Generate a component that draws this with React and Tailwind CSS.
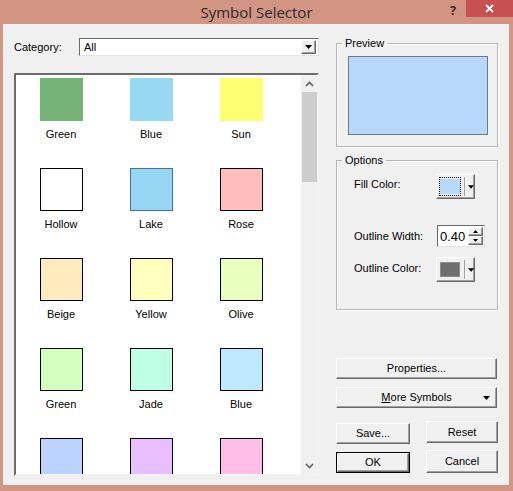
import React from "react";

const swatches = [
  { name: "Green", fill: "#75b376", border: "" },
  { name: "Blue", fill: "#98d8f0", border: "" },
  { name: "Sun", fill: "#ffff73", border: "" },
  { name: "Hollow", fill: "#ffffff", border: "border-black" },
  { name: "Lake", fill: "#97d6f2", border: "border-[#4a6e9c]" },
  { name: "Rose", fill: "#ffbebe", border: "border-black" },
  { name: "Beige", fill: "#ffebbe", border: "border-black" },
  { name: "Yellow", fill: "#ffffbe", border: "border-black" },
  { name: "Olive", fill: "#e9ffbe", border: "border-black" },
  { name: "Green", fill: "#d3ffbe", border: "border-black" },
  { name: "Jade", fill: "#beffe8", border: "border-black" },
  { name: "Blue", fill: "#bee8ff", border: "border-black" },
  // last row is scrolled out of view below the swatches
  { name: "", fill: "#bed2ff", border: "border-black" },
  { name: "", fill: "#e8beff", border: "border-black" },
  { name: "", fill: "#ffbee8", border: "border-black" },
];

const btn3d =
  "bg-[#f0f0f0] border border-t-white border-l-white border-r-[#696969] border-b-[#696969] shadow-[inset_-1px_-1px_0_#a0a0a0]";

function DownTri({ className = "" }) {
  return (
    <svg width="7" height="4" viewBox="0 0 7 4" className={className}>
      <path d="M0 0h7L3.5 4z" fill="#000" />
    </svg>
  );
}

function Chevron({ up }) {
  return (
    <svg width="9" height="6" viewBox="0 0 9 6">
      <path d={up ? "M1 5L4.5 1.5L8 5" : "M1 1L4.5 4.5L8 1"} stroke="#606060" strokeWidth="1.6" fill="none" />
    </svg>
  );
}

function ColorButton({ swatch, focus }) {
  return (
    <div className={`${btn3d} w-[39px] h-[25px] flex items-center pl-[2px]`}>
      <div className={`w-[24px] h-[19px] flex items-center justify-center ${focus ? "border border-dotted border-black" : ""}`}>
        <div className={`w-[20px] h-[15px] ${swatch}`} />
      </div>
      <div className="ml-[3px] w-[2px] h-[19px] border-l border-l-[#a0a0a0] border-r border-r-white" />
      <DownTri className="ml-[2px]" />
    </div>
  );
}

function Group({ label, className = "", children }) {
  return (
    <div className={`relative border border-[#b5b5b5] shadow-[inset_1px_1px_0_#fff,1px_1px_0_#fff] ${className}`}>
      <span className="absolute left-[5px] -top-[8px] px-[3px] bg-[#f0f0f0] leading-[14px]">{label}</span>
      {children}
    </div>
  );
}

export default function App() {
  return (
    <div
      className="w-[513px] h-[491px] bg-[#d29483] flex flex-col text-[11px] text-black"
      style={{ fontFamily: '"Liberation Sans", Arial, sans-serif' }}
    >
      <div className="relative h-[24px] flex items-center justify-center">
        <span className="text-[15px] text-[#2a2a2a] leading-none pt-[1px]" style={{ fontFamily: '"Open Sans", "Noto Sans", sans-serif' }}>
          Symbol Selector
        </span>
        <span className="absolute left-[450px] top-[1px] text-[13px] font-bold text-[#3a2a20]" style={{ fontFamily: '"Open Sans", sans-serif' }}>?</span>
        <div className="absolute right-0 top-0 w-[47px] h-[17px] bg-[#c75050] flex items-center justify-center">
          <svg width="9" height="9" viewBox="0 0 9 9">
            <path d="M1 1L8 8M8 1L1 8" stroke="#fff" strokeWidth="1.8" />
          </svg>
        </div>
      </div>

      <div className="ml-[3px] mr-[4px] mb-[6px] flex-1 bg-[#f0f0f0] flex pl-[11px] pt-[14px]">
        {/* left column */}
        <div className="w-[305px] flex flex-col">
          <div className="h-[18px] flex items-center">
            <span className="w-[65px]">Category:</span>
            <div className="w-[240px] h-[18px] bg-white border border-t-[#696969] border-l-[#696969] border-r-[#e3e3e3] border-b-[#e3e3e3] flex items-center justify-between pl-[4px] pr-[2px]">
              <span>All</span>
              <div className={`${btn3d} w-[15px] h-[14px] flex items-center justify-center`}>
                <DownTri />
              </div>
            </div>
          </div>

          <div className="mt-[17px] h-[403px] bg-white border-2 border-t-[#6d6d6d] border-l-[#6d6d6d] border-r-[#f2f2f2] border-b-[#f2f2f2] flex overflow-hidden">
            <div className="flex-1 overflow-hidden pt-[3px]">
              <div className="grid grid-cols-[90px_90px_90px] gap-y-[27px]">
                {swatches.map((s, i) => (
                  <div key={i} className="flex flex-col items-center h-[63px]">
                    <div className={`w-[43px] h-[43px] ${s.border ? "border " + s.border : ""}`} style={{ backgroundColor: s.fill }} />
                    {s.name && <span className="mt-[7px] leading-[13px]">{s.name}</span>}
                  </div>
                ))}
              </div>
            </div>
            <div className="w-[16px] bg-[#f0f0f0] flex flex-col items-center">
              <div className="h-[17px] flex items-center justify-center pt-[1px]">
                <Chevron up />
              </div>
              <div className="w-[15px] h-[90px] bg-[#cdcdcd]" />
              <div className="flex-1" />
              <div className="h-[17px] flex items-center justify-center">
                <Chevron />
              </div>
            </div>
          </div>
        </div>

        {/* right column */}
        <div className="ml-[17px] w-[162px] flex flex-col pt-[5px]">
          <Group label="Preview" className="h-[104px]">
            <div className="mt-[12px] ml-[11px] w-[140px] h-[79px] bg-[#b8d8fb] border border-[#6d7a88]" />
          </Group>

          <Group label="Options" className="mt-[13px] h-[150px] pl-[17px] pt-[13px]">
            <div className="flex items-start">
              <span className="w-[82px] pt-[2px]">Fill Color:</span>
              <ColorButton swatch="bg-[#b8d8fb]" focus />
            </div>
            <div className="flex items-center mt-[26px]">
              <span className="w-[83px]">Outline Width:</span>
              <div className="w-[48px] h-[22px] bg-white border border-t-[#696969] border-l-[#696969] border-r-[#e3e3e3] border-b-[#e3e3e3] flex items-center justify-between pl-[2px] pr-px">
                <span className="text-[13px] leading-none">0.40</span>
                <div className="flex flex-col">
                  <div className={`${btn3d} w-[15px] h-[9px] flex items-center justify-center`}>
                    <svg width="5" height="3" viewBox="0 0 5 3"><path d="M0 3h5L2.5 0z" fill="#000" /></svg>
                  </div>
                  <div className={`${btn3d} w-[15px] h-[9px] flex items-center justify-center`}>
                    <svg width="5" height="3" viewBox="0 0 5 3"><path d="M0 0h5L2.5 3z" fill="#000" /></svg>
                  </div>
                </div>
              </div>
            </div>
            <div className="flex items-start mt-[10px]">
              <span className="w-[82px] pt-[3px]">Outline Color:</span>
              <ColorButton swatch="bg-[#6e6e6e] border border-[#8a8a8a]" />
            </div>
          </Group>

          <button className={`${btn3d} mt-[48px] w-[161px] h-[21px] text-[11px]`}>Properties...</button>
          <button className={`${btn3d} mt-[8px] w-[161px] h-[21px] text-[11px] relative flex items-center justify-center`}>
            <span><span className="underline">M</span>ore Symbols</span>
            <DownTri className="absolute right-[6px]" />
          </button>
          <div className="mt-[13px] flex justify-between">
            <button className={`${btn3d} mt-[2px] w-[74px] h-[21px] text-[11px]`}>Save...</button>
            <button className={`${btn3d} w-[72px] h-[22px] text-[11px]`}>Reset</button>
          </div>
          <div className="mt-[6px] flex justify-between">
            <button className="mt-[2px] w-[74px] h-[21px] border border-black text-[11px] p-0">
              <div className={`${btn3d} w-full h-full flex items-center justify-center`}>OK</div>
            </button>
            <button className={`${btn3d} w-[72px] h-[23px] text-[11px]`}>Cancel</button>
          </div>
        </div>
      </div>
    </div>
  );
}
